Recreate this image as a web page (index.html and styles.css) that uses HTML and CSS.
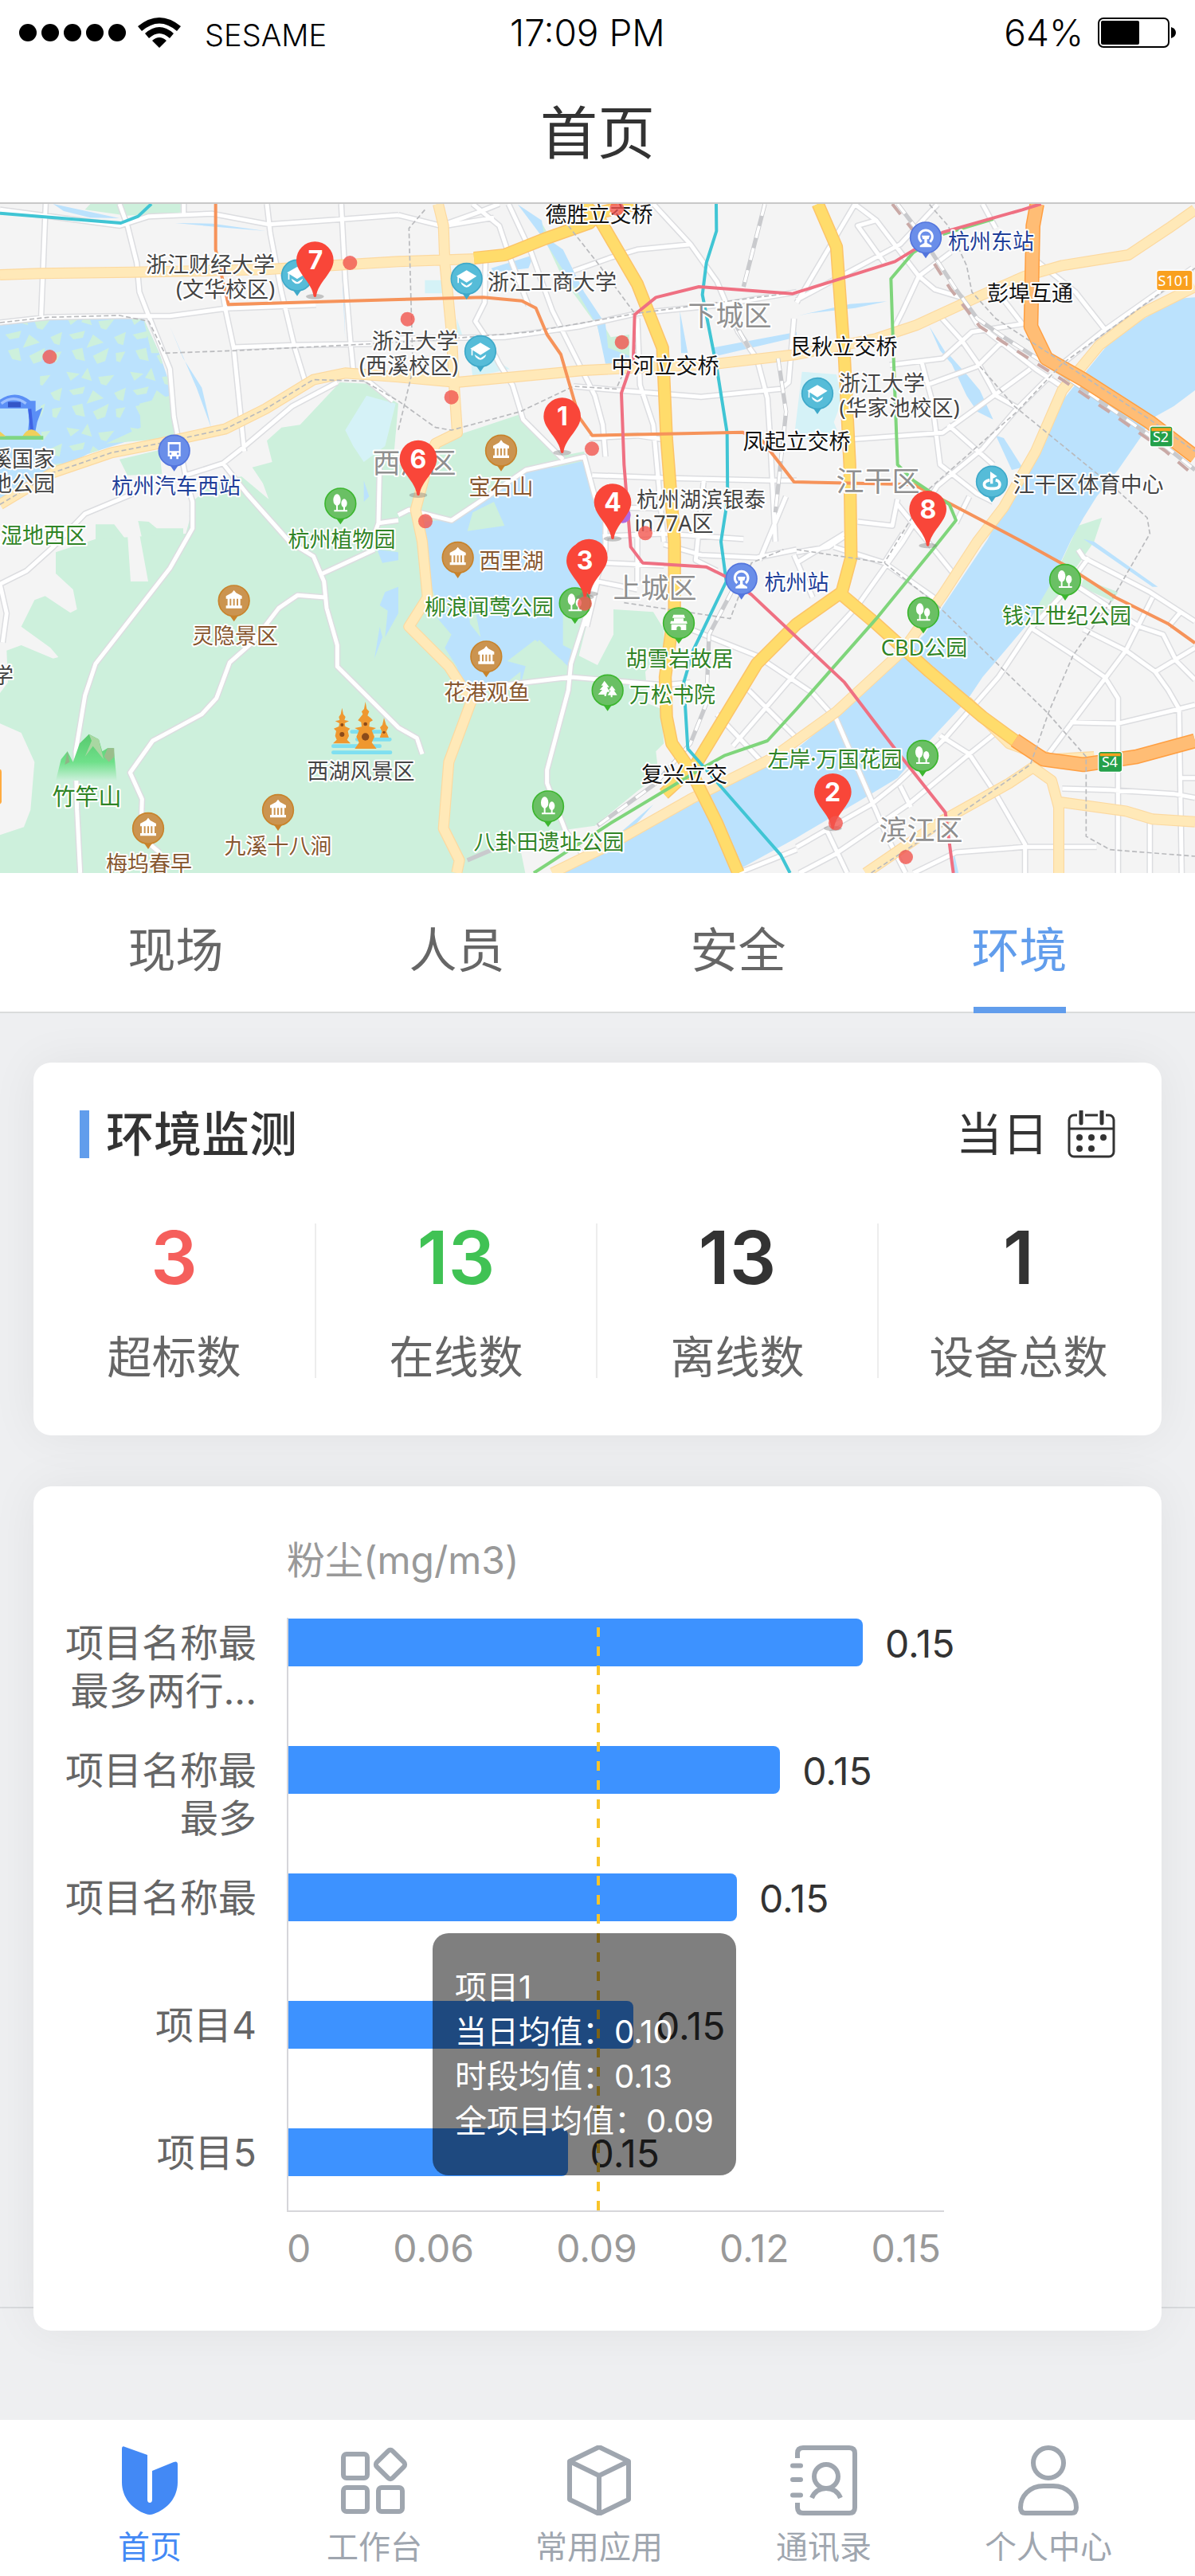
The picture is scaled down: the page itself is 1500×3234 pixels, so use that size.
FILE: index.html
```html
<!DOCTYPE html>
<html lang="zh-CN">
<head>
<meta charset="utf-8">
<meta name="viewport" content="width=device-width, initial-scale=1">
<title>首页</title>
<link rel="stylesheet" href="styles.css">
</head>
<body>
<header class="top">
  <div class="status">
    <div class="status-left">
      <svg width="134" height="22" viewBox="0 0 134 22" aria-hidden="true"><circle cx="11" cy="11" r="11"/><circle cx="39" cy="11" r="11"/><circle cx="67" cy="11" r="11"/><circle cx="95" cy="11" r="11"/><circle cx="123" cy="11" r="11"/></svg>
      <svg class="wifi" width="54" height="38" viewBox="0 0 54 38" aria-hidden="true"><path d="M0 11Q27-11 54 11L49 17Q27-2 5 17ZM9 20Q27 4 45 20L40 26Q27 14 14 26ZM18 29Q27 21 36 29L27 38Z"/></svg>
      <span class="carrier">SESAME</span>
    </div>
    <span class="clock">17:09 PM</span>
    <div class="status-right">
      <span>64%</span>
      <svg width="98" height="38" viewBox="0 0 98 38" aria-hidden="true"><rect x="1" y="1" width="88" height="36" rx="6" fill="none" stroke="#000" stroke-width="2"/><rect x="4" y="4" width="48" height="30" rx="2"/><path d="M92 12Q98 14 98 19T92 26Z"/></svg>
    </div>
  </div>
  <h1>首页</h1>
</header>

<svg class="map" viewBox="0 6 1500 840" role="img" aria-label="地图">
  <defs>
    <pattern id="wet" width="240" height="210" patternUnits="userSpaceOnUse">
      <path d="M10 20l50 8-34 26ZM90 5l16 50-40-12ZM130 40l60-8-30 40-20-6ZM20 90l60-14-8 26-36 6ZM110 90l40 30-64 20ZM190 100l44-20-10 50-20-6ZM30 150l40-10 10 50-34-8ZM110 170l60-30-14 50-30 10ZM196 160l36-6-20 40-14-4Z" fill="#cdf0dc"/>
    </pattern>
    <g id="school">
      <path d="M-18 52L0 78 18 52Z" fill="#3fa9c9"/><circle r="58" fill="#56bcd8" stroke="#3fa9c9" stroke-width="5"/>
      <path d="M-38-10L0-32 38-10 0 14ZM-22 12L0 26 22 12 18 22Q0 42-18 22ZM-34-8h5v24h-5Z" fill="#fff"/>
    </g>
    <g id="sport">
      <path d="M-18 52L0 78 18 52Z" fill="#3fa9c9"/><circle r="58" fill="#56bcd8" stroke="#3fa9c9" stroke-width="5"/>
      <path d="M-6 8V-38L20-20 4-12V8Z" fill="#fff"/><path d="M-8-6C-38 0-34 26-6 26H8C36 26 36-2 14-6" fill="none" stroke="#fff" stroke-width="11"/>
    </g>
    <g id="bus">
      <path d="M-18 52L0 78 18 52Z" fill="#5375dd"/><circle r="58" fill="#6a8ee9" stroke="#5375dd" stroke-width="5"/>
      <path d="M-24-32H24V22H16V32H8V22H-8V32H-16V22H-24ZM-18-24V2H18V-24Z" fill="#fff" fill-rule="evenodd"/><circle cx="-14" cy="12" r="4" fill="#6a8ee9"/><circle cx="14" cy="12" r="4" fill="#6a8ee9"/>
    </g>
    <g id="train">
      <path d="M-18 52L0 78 18 52Z" fill="#5375dd"/><circle r="58" fill="#6a8ee9" stroke="#5375dd" stroke-width="5"/>
      <path d="M-16 16A25 25 0 1 1 16 16M0-32v8" fill="none" stroke="#fff" stroke-width="9"/><path d="M-15-8H15L11 6H5V20L22 30V36H-22V30L-5 20V6H-11Z" fill="#fff"/>
    </g>
    <g id="trees">
      <path d="M-18 52L0 78 18 52Z" fill="#3cb62f"/><circle r="58" fill="#6ac064" stroke="#3cb62f" stroke-width="5"/>
      <ellipse cx="-13" cy="-14" rx="14" ry="22" fill="#fff"/><ellipse cx="14" cy="-2" rx="11" ry="16" fill="#fff"/><path d="M-16 0h6V24H11V8h6V24H26v6H-24v-6h8Z" fill="#fff"/>
    </g>
    <g id="pine">
      <path d="M-18 52L0 78 18 52Z" fill="#3cb62f"/><circle r="58" fill="#6ac064" stroke="#3cb62f" stroke-width="5"/>
      <path d="M-12-36L6-12H-2L8 6H-2L-6 22H-12V16H-36L-20-2H-30L-16-18H-24ZM16-18L30 0H24L36 18H18V26H12V18H0L12 0H4Z" fill="#fff"/>
    </g>
    <g id="house">
      <path d="M-18 52L0 78 18 52Z" fill="#3cb62f"/><circle r="58" fill="#6ac064" stroke="#3cb62f" stroke-width="5"/>
      <path d="M-20-32H20L24-20H-24ZM-18-18H18V-8H30L32 2H-32L-30-8H-18ZM-28 4H28V26H8V16Q0 8-8 16V26H-28Z" fill="#fff"/>
    </g>
    <g id="pavilion">
      <path d="M-18 52L0 78 18 52Z" fill="#c8832b"/><circle r="58" fill="#cb9450" stroke="#c8832b" stroke-width="5"/>
      <path d="M0-40L8-30 30-18V-8H24V18H30V28H-30V18H-24V-8H-30V-18L-8-30ZM-16-8V18H-10V-8ZM-3-8V18H3V-8ZM10-8V18H16V-8Z" fill="#fff" fill-rule="evenodd"/>
    </g>
    <g id="pin">
      <ellipse cy="137" rx="34" ry="10" fill="#777" opacity=".4"/>
      <path d="M0-70A70 70 0 0 1 70 0C70 48 10 84 5 136Q0 142-5 136C-10 84-70 48-70 0A70 70 0 0 1 0-70Z" fill="#f94639"/>
    </g>
    <path id="streets" d="M172 18L155 440M0 465L180 445 450 440 640 440 850 412 1190 398M0 40L450 100 560 65 800 55 1010 95 1300 75 1500 60M450 18L480 100 515 240 525 350 560 440 640 640 655 820 700 1050 725 1140 725 1240 640 1390 360 1750 320 1870 285 2080 290 2300 302 2538M692 18V60M1005 18L1018 130 1060 350 1110 560 1150 690M1285 18L1300 300 1320 540 1330 640 1480 760M830 300L850 420 880 560 920 950M880 558L1110 550 1400 545M700 1040L840 995 910 940 1100 780 1270 690M840 995L930 1110 1090 1290M500 1110L320 1185 200 1310 100 1400 0 1450 25 1560 10 1670M1090 1290L1180 1345 1220 1440 1230 1540 1270 1680 1270 1760 1410 1900 1500 1990 1570 2030 1590 2090M1215 1410L1410 1320M1225 1500L1120 1492 1050 1540 950 1670 865 1745 815 1880 760 1940 640 2005 575 2040 490 2160 535 2260 530 2400 600 2460M1430 990L1425 1220 1400 1290M1425 1220L1500 1210M1500 60L1660 100 1800 50 1880 18M1680 100L1860 70M1780 18L1880 100 1920 220 1990 400M1915 18L2000 200 2080 420 2150 560 2240 740 2270 850 2280 970M1828 240L1825 390 1790 460 1830 520 1880 620 1930 700 1970 830 2120 980M1500 525L1900 520 2180 480 2400 430 2700 400 3000 350M2160 270L2300 220 2400 190 2600 170 2650 240M2460 18L2600 170 2700 310 2780 500 2850 600 2890 750 2900 900 2920 1290M2400 450L2410 700 2460 850 2500 1290M2160 705L2330 720 2640 745 2940 715 2970 690 2990 450M1500 1190L1540 1170 1700 1210 1820 1130 1980 1020 2200 970 2240 1120 2280 1210 2280 1320 2210 1560 2150 1750 2140 1850 2060 2150 2060 2200 2130 2380 2210 2490M2220 900L2400 890 2500 905M2230 1040L2500 1050 2900 1060 3000 1060M2240 1160L2500 1165M2270 1270L2500 1260 2800 1280M2280 1370L2500 1380M2650 1060L2620 1360 2700 1400M2400 1270V1440M2210 1610L2250 1440 2400 1470M1900 1830L2150 1800 2500 1830 2600 1820M2600 1620L2850 1720 3060 1860 3150 1960 3280 2260 3340 2400 3410 2538M2700 1940L2870 2120M2760 2060L3000 1780M2820 1850L3000 2030M2500 1300L2640 1340 2850 1350 3000 1320M2860 1360L2960 1120M3000 390L3220 18M3220 20L3300 80 3230 100 3330 240M3530 20L3390 170 3000 380M3300 80L3460 290 3520 340 3620 370 3680 470 3900 640 3990 700M3580 200L3460 290 3400 420 3370 480M3700 18L3750 110M3900 230L4050 350 4160 490M3530 430L3620 530 3690 630M3350 625L3550 600 3660 500 3850 470 3780 380M3490 700L3680 630 3790 520M3470 610L3510 760 3540 1000 3680 1110 3740 1140M3200 905L3550 880 3880 640M3570 850L3740 1000M3690 630L3750 740 3840 790M3960 660L3820 800 3700 940 3530 1080 3400 1290 3230 1530 3000 1780M3380 1130L3360 1230 3230 1215M3380 1150L3590 1410M3650 1120L3600 1220M3180 1260L3000 1370M3000 1330L3120 1310 3180 1270M3140 1310L3330 1370 3530 1510M3330 1370L3400 1260M2990 1340L3060 1500M4490 260L4150 500 4000 620M4060 1320L4080 1350 4330 1480 4500 1590M4060 1460L4290 1610 4380 1640 4430 1740 4500 1810M4340 1500L4240 1700 4030 1980 3940 2100M4450 1550L4400 1610M4500 1690L4350 1780M4100 1350L3990 1500 3880 1620 3760 1800 3560 2030 3380 2200 3280 2280 3000 2440M3890 1620L4030 1710 4160 1800 4210 1880V2538M4080 1620L4240 1700 4350 1780 4400 1850 4440 1920 4450 2538M4030 1970L4210 1975 4440 1920 4500 1905M3540 2020L3650 2090 3750 2240 3860 2430V2538M3750 2010L3650 2090 3420 2280 3140 2470 3010 2538M3390 2210L3430 2290M3110 2370L3190 2538M4000 2220L4180 2225 4420 2240 4500 2255M4450 2180H4500M3440 2538L3600 2460 3860 2440 4130 2440M4330 2345V2538M2780 2538L3000 2450"/>
    <path id="lanes" d="M0 285L150 280 500 275 1000 265 1500 235 1790 225M0 1150L200 1030 420 955 600 920 850 865 1000 790 1180 680 1300 655 1500 670 1720 690 2200 645 2700 620 3000 585 3300 525 3450 475 3700 360 3860 290 4000 250 4250 210 4400 110 4500 40M1650 18L1670 100 1675 240 1700 500 1710 700 1722 880 1640 920 1610 1000 1565 1170 1590 1290 1610 1500 1540 1610 1690 1760 1775 1890 1690 2120 1670 2370 1730 2490 1720 2538M4500 330L4300 430 4140 550 4000 720 3900 950 3780 1160 3680 1290 3550 1490 3400 1700 3150 1930 2900 2110 2600 2260 2300 2430 2080 2538M3260 2538L3550 2340 3800 2200 3890 2140 3960 2190 3987 2290V2538M3987 2270L4240 2305 4340 2335 4500 2345M3640 1890L3800 2050 3960 2110 4120 2100"/>
    <path id="mains" d="M1785 222L1900 210 2050 150 2220 90 2260 50 2400 18M2200 18L2260 80 2400 320 2495 560 2510 900 2540 1290 2540 1540 2505 1800 2510 1950 2530 2050 2600 2150 2700 2350 2780 2538M3080 18L3150 180 3180 600 3200 1000 3205 1350 3170 1480 3000 1600 2850 1750 2620 2130 2500 2240M3170 1490L3300 1600 3500 1780 3700 1950 3830 2045"/>
    <path id="express" d="M3905 18L3890 100 3882 480 3940 600 4080 680 4330 840 4500 970M3822 2038L3930 2110 4080 2130 4280 2100 4500 2040"/>
  </defs>
  <g transform="scale(.333333)">
    <rect y="18" width="4500" height="2530" fill="#f4f4f4"/>
    <g fill="#cdf0dc">
      <path d="M340 18H680V50L480 62 320 40ZM450 980L600 945 610 1035 480 1040ZM360 1225L430 1225 480 1290H360ZM520 1212L560 1215 590 1240 690 1240V1300H540Z"/>
      <path d="M210 1330L360 1280 700 1260 735 1130 780 1090 850 1050 910 1045 1012 1130 990 1070 950 1010 1025 990 1005 910 1060 860 1130 850 1280 690 1380 695 1500 770 1480 1000 1580 1000 1640 920 1750 880 1960 810 2000 860 2100 970 2200 950 2240 1300 2310 1545 2460 1555 2500 1620 2500 1700 2430 1780 2440 1900 2490 1920 2500 2050 2470 2080 2480 2170 2400 2230 2240 2360 1950 2400 1980 2548H0V1860L30 1820 25 1700 80 1680 200 1730 220 1725 190 1690 80 1610 130 1510 170 1495 265 1558 290 1545 275 1470 210 1410Z"/>
      <path d="M1980 50L2040 90 2120 230 2180 330 2260 450 2300 520 2370 510V600H2280L2250 480 2120 300 2060 170ZM4150 1200L4120 1290 4030 1420 3980 1510 3890 1600 3900 1500 3990 1380 4060 1230ZM4080 1430L4210 1480 4190 1515 4070 1460Z"/>
    </g>
    <path d="M2310 1540L2310 1640 2250 1755 2180 1720 2210 1600 2270 1380 2300 1300 2400 1290ZM480 1260H525L558 1440H492ZM0 1975L80 2010 130 2120 115 2300 90 2365 0 2395Z" fill="#f4f4f4"/>
    <path d="M1600 305h66v50h-66ZM1720 450l20 60-20 10ZM1770 590h70l80 50-140 30ZM2990 900l30-250 130 10 20 100-30 80 20 50-50 20ZM1380 740l110 30-40 160-80 60-40-60-30-60Z" fill="#d5f2f7"/>
    <g fill="#bbe2fd">
      <path d="M0 475L180 450 540 450 600 580 640 700 655 900 500 905 330 960 0 1140Z"/>
      <path d="M4500 370L4430 375 4260 480 4170 550 4000 760 3860 990 3720 1280 3480 1640 3230 1880 3000 2070 2700 2230 2300 2440 2080 2548H2740L3000 2405 3230 2270 3380 2180 3500 2040 3640 1890 3700 1800 3870 1600 3950 1460 4035 1280 4080 1200 4130 1120 4210 1020 4300 890 4330 830 4420 780 4500 720Z"/>
      <path d="M2205 985L2090 1010 1990 1015 1900 1060 1820 1120 1760 1180 1700 1205 1600 1215 1590 1300 1600 1400 1625 1500 1640 1570 1700 1640 1675 1690 1720 1760 1760 1880 1890 1835 1960 1780 1960 1830 1990 1720 2030 1660 2140 1760 2170 1600 2200 1450 2240 1400 2280 1260 2240 1120Z"/>
      <path d="M1950 20L2040 80 2050 140 2120 190 2200 350 2280 470 2290 560 2370 590V620H2280L2250 480 2180 360 2090 220 2040 140ZM3560 570L3640 660 3690 720 3740 830 3680 800 3640 740ZM3750 890L3780 900 3850 1010 3810 1020ZM3500 480L3550 560 3600 640 3540 570ZM660 90L800 92 1000 120 820 105ZM640 480L690 600 760 710 795 860 740 710ZM1280 110L1300 530 1290 200ZM200 18L450 72 340 70 240 45ZM2680 560L3000 500V520L2700 590ZM3000 440L3200 395 3340 385 3220 410 3050 430ZM2560 420L2590 580H2565ZM4080 1280L4340 1460H4360L4120 1290ZM1850 260L2010 210 1990 260 1860 275ZM1420 1320l80 10v30l-60 10ZM1450 1480l50-20v100l-50 90 10-100-30-20ZM1370 1060l20 60-20 20ZM1430 1610l10 40-30 80ZM3590 2450l20 90h-20ZM2330 2390l130-110-70 80Z"/>
    </g>
    <path d="M0 475L180 450 540 450 600 580 640 700 655 900 500 905 330 960 160 1050 150 650 0 600Z" fill="url(#wet)"/>
    <path d="M530 860L525 770 640 740 655 900 400 920ZM540 450L600 580 570 580ZM1600 1400L1640 1500 1700 1530 1640 1580ZM1760 1250L1780 1180 1860 1140 1900 1230 1760 1250ZM1910 1740L2015 1660 2120 1740 2130 1820 1960 1850 2020 1770ZM2120 1560L2190 1600 2160 1700 2120 1680ZM1760 1500L1790 1550 1810 1650 1770 1600Z" fill="#cdf0dc"/>
    <g fill="none" stroke-linejoin="round">
      <use href="#streets" stroke="#dcdde0" stroke-width="24"/>
      <use href="#streets" stroke="#fff" stroke-width="15"/>
      <use href="#lanes" stroke="#fcd9a0" stroke-width="42"/>
      <use href="#lanes" stroke="#ffe9b8" stroke-width="35"/>
      <path d="M2880 18L2800 330M2740 420L2820 560M2930 600L2960 800 2920 1180M3380 18L3450 110 3600 340 3680 450 3780 520 4000 660 4200 800 4400 940 4500 1020M2760 1470L2670 1640 2660 1900 2600 2050 2470 2200 2250 2360M1900 2430L1760 2490" stroke="#c9cacd" stroke-width="16"/>
      <path d="M2880 18L2800 330M2740 420L2820 560M2930 600L2960 800 2920 1180M3380 18L3450 110 3600 340 3680 450 3780 520 4000 660 4200 800 4400 940 4500 1020M2760 1470L2670 1640 2660 1900 2600 2050 2470 2200 2250 2360" stroke="#fff" stroke-width="11" stroke-dasharray="46 40"/>
      <path d="M3360 18L3440 120 3580 340 3690 480 3780 540 4000 680 4190 810 4390 950 4490 1035" stroke="#c9a9a6" stroke-width="12" stroke-dasharray="50 42"/>
      <use href="#mains" stroke="#fcc468" stroke-width="49"/>
      <use href="#mains" stroke="#ffdc6b" stroke-width="40"/>
      <use href="#express" stroke="#ff9f42" stroke-width="56"/>
      <use href="#express" stroke="#ffbd75" stroke-width="47"/>
      <path d="M0 465L180 445 450 438 560 460 620 580 900 570 1400 545 1700 525 2000 500 2400 430 3000 350M0 1150L200 1030 420 955 600 920 850 865 1000 790 1180 680 1370 685 1500 760 1640 860 1700 870 1960 800 2160 705 2320 715 2345 660M1600 40L1540 110 1555 640 1500 870M2140 100L2250 240 2390 430 2390 600M3500 20L3570 100 3640 250 3660 350 3750 450 4330 830 4500 950M4500 260L4000 620 3830 800 3500 1090 3330 1370M3690 630L3820 780 4200 1090 4320 1200 4330 1260 4180 1520 4040 1720 3950 1930 3880 2130 3550 2360 3280 2538M3000 1320L3330 1370 3520 1520 3940 1930 4090 2100V2400L4180 2450 4500 2475M2350 1520L2620 1560 2750 1580 2830 1370 2950 1320" stroke="#b9babd" stroke-width="5" stroke-dasharray="18 10"/>
      <g stroke-width="12">
        <path d="M0 53L455 90 520 65 570 18M2697 18L2698 120 2660 240 2645 360 2700 640 2738 880 2740 1130 2715 1290 2735 1440 2610 1700 2575 1820 2590 2070 2940 2470 2975 2538" stroke="#40c5d4"/>
        <path d="M812 18V190L860 397 1500 378 1820 370 1965 383 2018 410 2060 510 2112 585 2180 820 2230 890 2795 878 2870 910 2990 1065 3440 1075 3850 1290 4030 1390 4200 1500 4400 1600 4500 1672" stroke="#f6935a"/>
        <path d="M3540 140L3440 200 3355 300 3365 600 3380 1000 3440 1060 3575 1150 3600 1210 3520 1310 3300 1580 3000 1920 2890 2040 2730 2095 2650 2140 2300 2350 2010 2538M3740 75L3550 132" stroke="#7fd57b"/>
        <path d="M3920 18L3850 40 3550 125 3370 235 3180 295 2985 356 2632 330 2470 370 2390 435 2385 600 2340 730 2350 1000 2375 1310 2420 1370 2660 1385 2740 1425 2830 1490 3180 1820 3370 2070 3560 2310 3590 2538" stroke="#ef7082"/>
      </g>
    </g>
    <!-- wetland gate -->
    <path d="M0 755Q60 715 115 760H134V800L160 785 140 840 132 880H105L110 830 105 788H0Z" fill="#5b8ff6"/><path d="M5 770Q50 735 98 770" fill="none" stroke="#9cc0ff" stroke-width="10"/><rect x="30" y="764" width="48" height="20" fill="#3355c8"/><path d="M112 790L120 870" stroke="#3e63e4" stroke-width="12"/><path d="M80 900Q100 865 120 868T160 900Z" fill="#f0cf5b"/><path d="M0 892H163V906H0Z" fill="#7fd685"/><path d="M0 875L22 893H0Z" fill="#f0cf5b"/>
    <!-- bamboo mountain -->
    <defs><linearGradient id="hill" x2="0" y2="1"><stop stop-color="#57c96e"/><stop offset=".6" stop-color="#6fe08a"/><stop offset="1" stop-color="#cdf0dc"/></linearGradient></defs>
    <path d="M210 2190L230 2110 254 2080 275 2120 300 2050 335 2015 372 2035 385 2080 405 2068H428L440 2190Z" fill="url(#hill)"/><path d="M335 2015L372 2035 390 2110 350 2060 320 2100 345 2040Z" fill="#a9d7a2"/><path d="M405 2068L430 2068 430 2100 410 2120 392 2100Z" fill="#9bbd8c"/><path d="M254 2080L262 2120 244 2130Z" fill="#8fb587"/>
    <!-- stone pagodas -->
    <g stroke="#7fdff0" stroke-width="14" stroke-linecap="round"><path d="M1255 2060H1430M1255 2084H1470M1325 2006H1440M1345 2035H1468"/></g>
    <path d="M1376 1893L1381 1920 1390 1930 1384 1945 1397 1955 1404 1963 1392 1970 1390 1987 1416 1992 1400 2001 1410 2025 1400 2047 1418 2070H1336L1352 2047 1342 2025 1352 2001 1336 1992 1362 1987 1360 1970 1348 1963 1358 1950 1366 1940 1362 1930 1371 1920Z" fill="#ef9830"/><circle cx="1376" cy="2025" r="14" fill="#8a4a1a"/><circle cx="1376" cy="1977" r="7" fill="#8a4a1a"/>
    <path d="M1288 1916L1293 1940 1301 1950 1297 1962 1314 1966 1298 1974 1300 1986 1318 1994 1310 2003 1314 2022 1307 2036 1320 2050H1254L1268 2036 1262 2022 1266 2003 1257 1994 1276 1986 1278 1974 1262 1966 1279 1962 1276 1950 1283 1940Z" fill="#ef9830"/><circle cx="1288" cy="2016" r="9" fill="#8a4a1a"/><circle cx="1288" cy="1980" r="6" fill="#8a4a1a"/>
    <path d="M1446 1954L1454 1980 1462 1990 1455 2005 1464 2028H1430L1438 2005 1431 1990 1440 1980Z" fill="#ef9830"/><circle cx="1446" cy="2008" r="5" fill="#8a4a1a"/>
    <rect x="-20" y="2147" width="26" height="132" rx="10" fill="#ffab40"/>
    <circle cx="2345" cy="1190" r="30" fill="#b06ae0"/>
    <use href="#school" x="1119" y="287"/><use href="#school" x="1757" y="300"/><use href="#school" x="1809" y="573"/><use href="#school" x="3078" y="732"/>
    <use href="#sport" x="3735" y="1064"/><use href="#bus" x="656" y="947"/><use href="#train" x="3486" y="145"/><use href="#train" x="2792" y="1430"/>
    <use href="#trees" x="1282" y="1147"/><use href="#trees" x="2165" y="1522"/><use href="#trees" x="2064" y="2287"/><use href="#trees" x="3477" y="1558"/><use href="#trees" x="4011" y="1434"/><use href="#trees" x="3474" y="2097"/>
    <use href="#pine" x="2288" y="1850"/><use href="#house" x="2556" y="1597"/>
    <use href="#pavilion" x="1887" y="947"/><use href="#pavilion" x="881" y="1513"/><use href="#pavilion" x="558" y="2370"/><use href="#pavilion" x="1047" y="2301"/><use href="#pavilion" x="1724" y="1350"/><use href="#pavilion" x="1831" y="1723"/>
    <g stroke="#fff" stroke-width="4"><rect x="4355" y="268" width="136" height="76" rx="10" fill="#f9a01e"/><rect x="4330" y="855" width="86" height="78" rx="10" fill="#24a04a"/><rect x="4136" y="2080" width="90" height="78" rx="10" fill="#24a04a"/></g>
    <path d="M4336 862H4410V874H4336ZM4142 2087H4220V2098H4142Z" fill="#f9a01e"/>
  </g>
  <g class="place">
    <text x="264" y="92">浙江财经大学</text><text x="283" y="123">(文华校区)</text>
    <text class="end" x="69" y="336">溪国家</text><text class="end" x="69" y="367">地公园</text>
    <text class="end" x="17" y="608">学</text><text x="453" y="728">西湖风景区</text>
    <text x="521" y="188">浙江大学</text><text x="513" y="219">(西溪校区)</text>
    <text x="693" y="114">浙江工商大学</text><text x="880" y="387">杭州湖滨银泰</text><text x="846" y="417">in77A区</text>
    <text x="1107" y="241">浙江大学</text><text x="1129" y="272">(华家池校区)</text><text x="1366" y="368">江干区体育中心</text>
  </g>
  <g class="place junction">
    <text x="752" y="29">德胜立交桥</text><text x="835" y="219">中河立交桥</text><text x="1000" y="314">凤起立交桥</text><text x="1059" y="195">艮秋立交桥</text><text x="1293" y="128">彭埠互通</text><text x="859" y="732">复兴立交</text>
  </g>
  <g class="place station">
    <text x="221" y="370">杭州汽车西站</text><text x="1244" y="63">杭州东站</text><text x="1000" y="491">杭州站</text>
  </g>
  <g class="place park">
    <text class="end" x="109" y="432">溪湿地西区</text><text x="429" y="437">杭州植物园</text><text class="peak" x="109" y="761">竹竿山</text>
    <text x="614" y="522">柳浪闻莺公园</text><text x="853" y="587">胡雪岩故居</text><text x="844" y="632">万松书院</text><text x="1048" y="713">左岸·万国花园</text><text x="689" y="817">八卦田遗址公园</text><text x="1160" y="573">CBD公园</text><text x="1339" y="533">钱江世纪公园</text>
  </g>
  <g class="place scenic">
    <text x="295" y="558">灵隐景区</text><text x="187" y="844">梅坞春早</text><text x="349" y="822">九溪十八涧</text><text x="629" y="371">宝石山</text><text x="642" y="464">西里湖</text><text x="611" y="629">花港观鱼</text>
  </g>
  <g class="place district">
    <text x="520" y="344">西湖区</text><text x="916" y="159">下城区</text><text x="1102" y="367">江干区</text><text x="822" y="501">上城区</text><text x="1156" y="805">滨江区</text>
  </g>
  <g class="plate"><text x="1474" y="109">S101</text><text x="1457" y="305">S2</text><text x="1393" y="713">S4</text></g>
  <g transform="scale(.333333)">
    <use href="#pin" x="1186" y="230"/><use href="#pin" x="2117" y="818"/><use href="#pin" x="1575" y="978"/><use href="#pin" x="2307" y="1142"/><use href="#pin" x="3494" y="1168"/><use href="#pin" x="3136" y="2233"/><use href="#pin" x="2218" y="1350"/><use href="#pin" x="2203" y="1362"/>
    <g fill="#f2564f" opacity=".8"><circle cx="1318" cy="240" r="27"/><circle cx="187" cy="594" r="27"/><circle cx="2323" cy="35" r="27"/><circle cx="1535" cy="452" r="27"/><circle cx="2342" cy="539" r="27"/><circle cx="1700" cy="746" r="27"/><circle cx="2229" cy="940" r="27"/><circle cx="1602" cy="1213" r="27"/><circle cx="2430" cy="1258" r="27"/><circle cx="2202" cy="1523" r="27"/><circle cx="3147" cy="2350" r="27"/><circle cx="3411" cy="2478" r="27"/></g>
  </g>
  <g class="pin-no"><text x="396" y="88">7</text><text x="706" y="284">1</text><text x="525" y="338">6</text><text x="769" y="392">4</text><text x="1165" y="401">8</text><text x="1045" y="756">2</text><text x="734" y="465">3</text></g>
</svg>

<nav class="tabs" aria-label="分类">
  <button type="button">现场</button>
  <button type="button">人员</button>
  <button type="button">安全</button>
  <button type="button" class="active" aria-current="true">环境</button>
</nav>

<main>
  <section class="card summary">
    <div class="card-head">
      <h2>环境监测</h2>
      <button type="button" class="period">当日
        <svg width="60" height="60" viewBox="0 0 60 60" fill="none" stroke="#333" stroke-width="3" aria-hidden="true"><path d="M12 6H8A6 6 0 0 0 2 12V52A6 6 0 0 0 8 58H52A6 6 0 0 0 58 52V12A6 6 0 0 0 52 6H48M22 6H38M2 23H58"/><path d="M17 1V16M43 1V16" stroke-width="5" stroke-linecap="round"/><g fill="#333" stroke="none"><circle cx="15" cy="34" r="4"/><circle cx="30" cy="34" r="4"/><circle cx="45" cy="34" r="4"/><circle cx="15" cy="48" r="4"/><circle cx="30" cy="48" r="4"/></g></svg>
      </button>
    </div>
    <ul class="stats">
      <li><strong class="over">3</strong><span>超标数</span></li>
      <li><strong class="online">13</strong><span>在线数</span></li>
      <li><strong>13</strong><span>离线数</span></li>
      <li><strong>1</strong><span>设备总数</span></li>
    </ul>
  </section>

  <section class="card chart">
    <h3>粉尘(mg/m3)</h3>
    <div class="plot">
      <ul class="bars">
        <li><span class="name">项目名称最最多两行...</span><div class="track"><div class="bar" style="width:87.6%"></div><span class="value">0.15</span></div></li>
        <li><span class="name">项目名称最最多</span><div class="track"><div class="bar" style="width:75%"></div><span class="value">0.15</span></div></li>
        <li><span class="name">项目名称最</span><div class="track"><div class="bar" style="width:68.4%"></div><span class="value">0.15</span></div></li>
        <li><span class="name">项目4</span><div class="track"><div class="bar" style="width:52.6%"></div><span class="value">0.15</span></div></li>
        <li><span class="name">项目5</span><div class="track"><div class="bar" style="width:42.6%"></div><span class="value">0.15</span></div></li>
      </ul>
      <div class="overlay">
        <div class="average"></div>
        <div class="tooltip" role="tooltip"><p>项目1</p><p>当日均值：0.10</p><p>时段均值：0.13</p><p>全项目均值：0.09</p></div>
      </div>
    </div>
    <div class="axis"><span>0</span><span>0.06</span><span>0.09</span><span>0.12</span><span>0.15</span></div>
  </section>
</main>

<nav class="bottom" aria-label="主导航">
  <a href="#home" class="active" aria-current="page"><svg width="88" height="88" viewBox="0 0 88 88" aria-hidden="true"><path d="M9 4Q9 0 13 2L41 12V68Q41 72 44 72T47 68V32L74 21Q79 19 79 24V46C79 66 66 80 49 86Q44 88 39 86C22 80 9 66 9 46Z" fill="#4389f5"/></svg>首页</a>
  <a href="#work"><svg width="88" height="88" viewBox="0 0 88 88" aria-hidden="true"><g fill="none" stroke="#9fa6af" stroke-width="6"><rect x="5" y="11" width="30" height="30" rx="4"/><rect x="5" y="53" width="30" height="30" rx="4"/><rect x="49" y="53" width="30" height="30" rx="4"/><rect x="50" y="10" width="28" height="28" rx="4" transform="rotate(45 64 24)"/></g></svg>工作台</a>
  <a href="#apps"><svg width="88" height="88" viewBox="0 0 88 88" aria-hidden="true"><path d="M44 2L81 20V68L44 86 7 68V20ZM7 20L44 38 81 20M44 38V86" fill="none" stroke="#9fa6af" stroke-width="6" stroke-linejoin="round"/></svg>常用应用</a>
  <a href="#contacts"><svg width="88" height="88" viewBox="0 0 88 88" aria-hidden="true"><g fill="none" stroke="#9fa6af" stroke-width="6"><path d="M11 16V10Q11 3 18 3H76Q83 3 83 10V78Q83 85 76 85H18Q11 85 11 78V72"/><circle cx="47" cy="39" r="15"/><path d="M29 66Q34 54 47 54T65 66"/><path d="M5 25.500H15M5 43H15M5 62.500H15" stroke-linecap="round"/></g></svg>通讯录</a>
  <a href="#me"><svg width="88" height="88" viewBox="0 0 88 88" aria-hidden="true"><g fill="none" stroke="#9fa6af" stroke-width="6"><circle cx="44" cy="22" r="19"/><path d="M38 51H50C68 51 79 64 79 78Q79 85 73 85H15Q9 85 9 78C9 64 20 51 38 51Z"/></g></svg>个人中心</a>
</nav>
</body>
</html>
```
FILE: styles.css
```css
* { box-sizing: border-box; }
body {
  margin: 0;
  background: #fff;
  color: #333;
  font-family: Inter, "Noto Sans CJK SC", sans-serif;
}
h1, h2, h3, p, ul { margin: 0; padding: 0; font-weight: 400; list-style: none; }
button { border: 0; padding: 0; background: none; font: inherit; color: inherit; }
svg { display: block; }

.top { border-bottom: 2px solid #c8c8c8; }
.status {
  display: grid;
  grid-template-columns: 49fr auto 51fr;
  align-items: center;
  height: 82px;
  padding: 0 24px;
  color: #000;
  font-size: 46px;
  font-weight: 300;
}
.status-left, .status-right { display: flex; align-items: center; }
.status-right { justify-content: flex-end; gap: 18px; }
.wifi { margin: 0 30px 0 15px; }
.carrier { font-size: 38px; padding-top: 6px; }
h1 { height: 172px; font-size: 72px; line-height: 170px; text-align: center; }

.map { width: 100%; height: auto; }
.place text {
  font-size: 27px;
  fill: #444;
  text-anchor: middle;
  paint-order: stroke;
  stroke: #fff;
  stroke-width: 4px;
  stroke-linejoin: round;
  font-family: "Noto Sans", "Noto Sans CJK SC", sans-serif;
}
.place .end { text-anchor: end; }
.junction text { fill: #111; }
.station text { fill: #1f3f99; }
.park text { fill: #2f8426; }
.park .peak { font-size: 29px; }
.scenic text { fill: #87572f; }
.district text { fill: #8f8f8f; font-size: 35px; }
.plate text { fill: #fff; font-size: 18px; text-anchor: middle; font-family: "Noto Sans", sans-serif; }
.pin-no text { fill: #fff; font-size: 32px; font-weight: 700; text-anchor: middle; }

.tabs {
  display: grid;
  grid-template-columns: repeat(4, 1fr);
  justify-items: center;
  height: 176px;
  padding: 0 44px;
  box-shadow: inset 0 -2px #dadcdc;
  font-size: 60px;
  color: #666;
}
.tabs button { padding: 16px 0 8px; }
.tabs .active { background: linear-gradient(#619dec, #619dec) bottom / 116px 8px no-repeat; color: #619dec; }

main {
  display: flex;
  flex-direction: column;
  gap: 64px;
  padding: 62px 42px 112px;
  background: linear-gradient(#d8dadd, #d8dadd) 0 calc(100% - 140px) / 100% 2px no-repeat, #eeeff1;
}
.card { border-radius: 22px; background: #fff; box-shadow: 0 0 60px rgba(0, 0, 0, .06); }
.card-head {
  display: flex;
  justify-content: space-between;
  padding: 60px 58px 0;
  font-size: 58px;
  line-height: 60px;
}
.card-head h2 { border-left: 12px solid #619dec; padding-left: 21px; font-size: 60px; font-weight: 500; }
.period { display: flex; gap: 24px; }
.stats { display: grid; grid-template-columns: repeat(4, 1fr); padding: 82px 4px 72px 0; }
.stats li { display: flex; flex-direction: column; align-items: center; gap: 56px; }
.stats li + li { border-left: 2px solid #ededed; }
.stats strong { font-size: 92px; font-weight: 600; line-height: 86px; }
.stats span { color: #666; font-size: 56px; line-height: 52px; }
.over { color: #f55f5c; }
.online { color: #40c254; }

.chart { padding: 63px 273px 73px 0; font-size: 48px; line-height: 60px; }
.chart h3 { margin: 0 0 42px 318px; font-size: 48px; color: #999; }
.plot { position: relative; }
.bars li { display: flex; height: 160px; }
.bars li:last-child { height: 104px; }
.name { width: 320px; margin-right: -2px; padding: 2px 40px 0 30px; color: #666; text-align: right; }
.track { display: flex; flex: 1; align-items: flex-start; gap: 28px; border-left: 2px solid #d6d6da; padding-top: 1px; }
.bar { flex: none; height: 60px; border-radius: 0 8px 8px 0; background: #3d92ff; }
.value { width: 0; line-height: 64px; }
.overlay { position: absolute; top: 12px; right: 0; bottom: 0; left: 320px; }
.average {
  position: absolute;
  top: 0;
  bottom: -2px;
  left: 47%;
  width: 4px;
  background: repeating-linear-gradient(#f8c42a 0 12px, transparent 12px 24px);
}
.tooltip {
  position: absolute;
  bottom: 44px;
  left: 22%;
  padding: 40px 28px;
  border-radius: 20px;
  background: rgba(0, 0, 0, .5);
  color: #fff;
  font-size: 40px;
  font-weight: 500;
  line-height: 56px;
  white-space: nowrap;
}
.axis {
  display: flex;
  justify-content: space-between;
  margin-left: 318px;
  padding: 16px 4px 0 0;
  border-top: 2px solid #d6d6da;
  color: #999;
}

.bottom {
  display: grid;
  grid-template-columns: repeat(5, 1fr);
  padding: 32px 43px 8px 47px;
  font-size: 40px;
  line-height: 56px;
}
.bottom a { display: flex; flex-direction: column; align-items: center; gap: 12px; color: #9fa6af; text-decoration: none; }
.bottom .active { color: #4389f5; }
```
